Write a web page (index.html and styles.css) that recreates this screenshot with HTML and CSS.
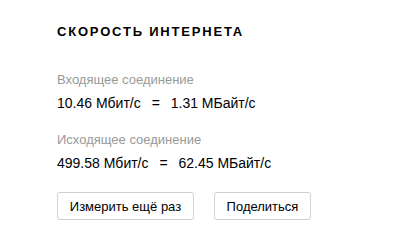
FILE: index.html
```html
<!DOCTYPE html>
<html lang="ru">
<head>
<meta charset="utf-8">
<link rel="stylesheet" href="styles.css">
</head>
<body>
<div class="page">
  <h1 class="title">Скорость интернета</h1>
  <div class="block">
    <div class="label">Входящее соединение</div>
    <div class="value">10.46 Мбит/с <span class="eq">=</span> 1.31 МБайт/с</div>
  </div>
  <div class="block">
    <div class="label">Исходящее соединение</div>
    <div class="value">499.58 Мбит/с <span class="eq">=</span> 62.45 МБайт/с</div>
  </div>
  <div class="buttons">
    <button class="btn btn-wide">Измерить ещё раз</button>
    <button class="btn btn-share">Поделиться</button>
  </div>
</div>
</body>
</html>
```

FILE: styles.css
```css
html, body {
  margin: 0;
  padding: 0;
  background: #fff;
}
body {
  font-family: "Liberation Sans", Arial, sans-serif;
  color: #000;
}
.page {
  padding: 24px 0 0 57px;
}
.title {
  margin: 0;
  font-size: 13px;
  font-weight: bold;
  line-height: 16px;
  letter-spacing: 1.8px;
  text-transform: uppercase;
  color: #000;
}
.block {
  margin-top: 32px;
}
.block + .block {
  margin-top: 20px;
}
.label {
  font-size: 13px;
  line-height: 16px;
  color: #999;
}
.value {
  margin-top: 6px;
  font-size: 14px;
  line-height: 18px;
  color: #000;
}
.eq {
  margin: 0 7px;
}
.buttons {
  display: flex;
  gap: 20px;
  margin-top: 20px;
}
.btn {
  height: 28px;
  padding: 0;
  font-family: "Liberation Sans", Arial, sans-serif;
  font-size: 13px;
  white-space: nowrap;
  color: #000;
  background: #fff;
  border: 1px solid #d0d0d0;
  border-radius: 3px;
}
.btn-wide {
  width: 137px;
}
.btn-share {
  width: 97px;
}
```
